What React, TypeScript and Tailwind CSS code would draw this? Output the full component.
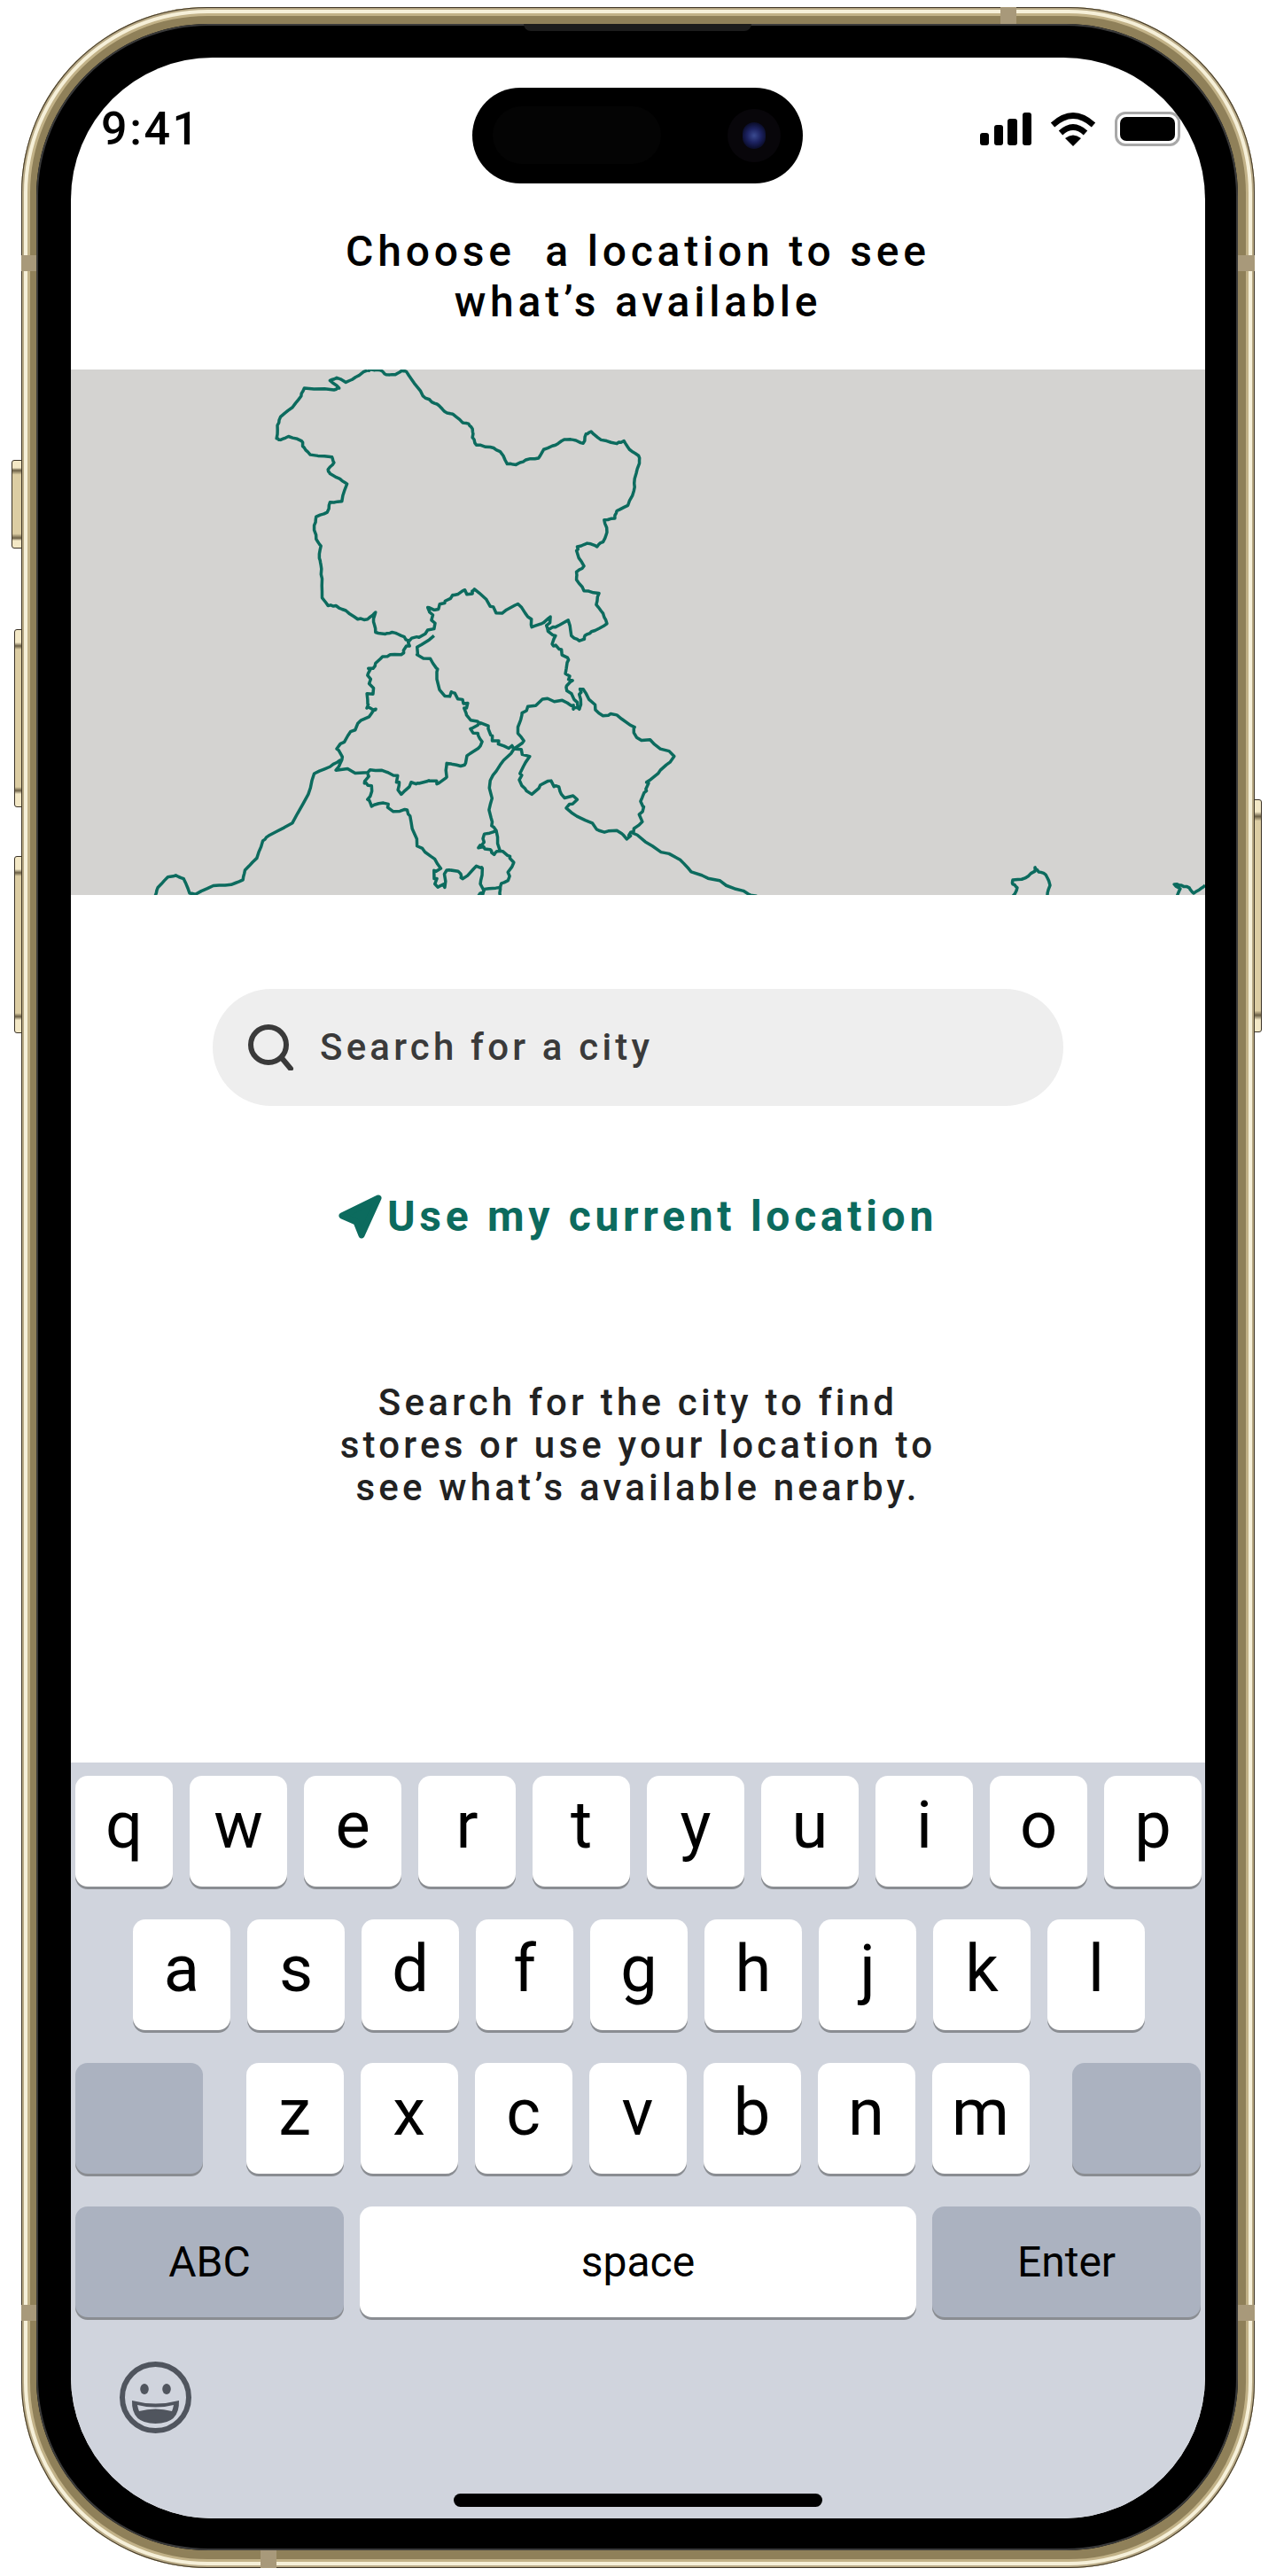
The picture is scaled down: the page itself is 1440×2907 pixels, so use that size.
import React from "react";

const roboto = "font-['Roboto',sans-serif]";

type Pt = number[];
function rough(flat: Pt, amp: number, seed: number) {
  let s = seed;
  const rnd = () => {
    s = (s * 9301 + 49297) % 233280;
    return s / 233280 - 0.5;
  };
  let d = "";
  for (let i = 0; i < flat.length; i += 2) {
    const x = flat[i];
    const y = flat[i + 1];
    d += (i === 0 ? "M" : "L") + x + " " + y + " ";
    if (i + 3 < flat.length && amp > 0) {
      const nx = flat[i + 2];
      const ny = flat[i + 3];
      d += "L" + ((x * 2 + nx) / 3 + rnd() * amp).toFixed(1) + " " + ((y * 2 + ny) / 3 + rnd() * amp).toFixed(1) + " ";
      d += "L" + ((x + nx * 2) / 3 + rnd() * amp).toFixed(1) + " " + ((y + ny * 2) / 3 + rnd() * amp).toFixed(1) + " ";
    }
  }
  return d;
}

const smooth: [Pt, number][] = [
  [[750,20,760,18,782,20,797,33,820,33,838,20,848,24,868,58,890,95,912,112,930,122,945,140,965,147,990,172,1005,175,1015,190,1015,215,1025,237,1060,243,1085,256,1103,292,1125,294,1150,280,1182,275,1195,250,1225,237,1247,221,1270,222,1295,232,1302,205,1315,198,1340,222,1380,233,1398,225,1412,250,1435,268,1437,290,1425,335,1423,370,1408,412,1380,428,1375,450,1348,454,1355,490,1345,518,1330,532,1305,522,1280,532,1280,550,1297,588,1278,605,1278,628,1297,660,1335,667,1328,700,1345,725,1355,755,1325,775,1303,787,1298,800,1285,805,1265,790,1257,745,1225,765,1205,770], 4],
  [[855,805,835,790,812,780,795,785,770,780,765,750,770,722,750,742,725,742,695,717,670,703,650,703,635,680,635,625,632,585,628,565,632,530,620,510,615,470,620,445,648,432,655,403,685,400,698,350,680,335,655,320,650,308,665,288,660,272,605,265,590,245,583,225,550,212,530,222,520,218,522,180,530,155,560,128,582,95,590,72,665,77,678,72,655,50,672,42,695,55,720,40,750,20], 4],
  [[682,1150,655,1170,615,1190,600,1250,560,1333,500,1370,485,1385,470,1435,440,1470,435,1498,405,1512,360,1515,315,1540,300,1537,285,1495,265,1485,245,1490,220,1520,213,1545], 2],
];
const jagged: [Pt, number][] = [
  [[1205,770,1212,735,1195,752,1165,765,1155,735,1130,698,1090,725,1060,705,1020,655,1015,668,990,660,965,672,945,695,920,715,902,708,915,730,918,770,880,795,855,805], 12],
  [[918,790,880,820,875,845,915,870,925,895,945,965,965,955,990,975,1000,1000,1000,1020,1035,1045,1055,1060,1065,1095,1095,1110,1120,1118], 14],
  [[1205,770,1225,790,1220,820,1240,830,1258,860,1250,900,1268,920,1252,940,1272,975,1285,1003,1270,1003,1255,985,1205,972,1155,995,1140,1020,1130,1055,1145,1095,1120,1118], 12],
  [[855,805,848,820,835,845,800,850,770,870,752,885,750,905,765,942,750,975,748,1000,770,1005,760,1015,725,1045,700,1080,672,1118,685,1150,670,1180,750,1187,785,1180,815,1195,830,1215,835,1250,860,1215,880,1218,905,1210,925,1220,950,1200,950,1160,975,1165,995,1165,1005,1135,1035,1110,1030,1080,1010,1060,1030,1045], 14],
  [[750,1190,742,1218,760,1225,750,1265,760,1285,790,1275,815,1300,850,1295,860,1330,875,1400,910,1430,935,1465,918,1480,920,1510,945,1520,950,1470,985,1480,990,1495,1025,1458,1040,1465,1035,1510,1040,1545], 12],
  [[1030,1545,1045,1525,1085,1520,1085,1545], 8],
  [[1120,1118,1085,1165,1060,1210,1060,1280,1065,1330,1075,1355,1045,1365,1040,1395,1030,1405,1060,1410,1070,1425,1085,1415,1075,1355], 10],
  [[1085,1415,1110,1430,1115,1460,1105,1500,1085,1520], 14],
  [[1120,1118,1160,1140,1135,1190,1140,1225,1165,1250,1205,1212,1225,1225,1240,1250,1280,1265,1252,1290,1300,1325,1335,1355,1380,1355,1405,1380,1415,1360,1435,1340,1445,1300,1440,1270,1455,1240,1455,1215,1490,1180,1525,1140,1475,1105,1430,1085,1425,1055,1380,1020,1345,1022,1325,990,1295,945,1285,960,1285,1003], 14],
  [[1415,1360,1470,1400,1540,1440,1568,1475,1640,1500,1700,1530,1734,1545], 12],
  [[2381,1545,2392,1521,2381,1511,2381,1498,2412,1493,2437,1473,2437,1462,2446,1475,2464,1483,2475,1514,2468,1545], 4],
  [[2796,1545,2804,1524,2789,1511,2807,1514,2827,1521,2838,1537,2852,1527,2867,1514], 3],
];

function MapLines() {
  const paths = [...smooth, ...jagged];
  return (
    <svg className="block w-full h-full" viewBox="0 18 2867 1524" preserveAspectRatio="none" fill="none">
      {paths.map(([pts, amp], i) => (
        <path
          key={i}
          d={rough(pts, amp, i * 37 + 11)}
          stroke="#0c6b5e"
          strokeWidth="3.5"
          strokeLinejoin="round"
          vectorEffect="non-scaling-stroke"
        />
      ))}
    </svg>
  );
}

function Key({ label, className = "" }: { label: string; className?: string }) {
  return (
    <div className={`w-[110px] h-[125px] shrink-0 rounded-[14px] bg-white shadow-[0_3px_0_#8a8d92] flex items-center justify-center pb-[13px] text-[74px] leading-none text-black ${roboto} ${className}`}>
      {label}
    </div>
  );
}

function Band({ className }: { className: string }) {
  return <div className={`absolute bg-[#a8997a] ${className}`} />;
}

export default function App() {
  return (
    <div className="relative w-[1440px] h-[2907px] bg-white overflow-hidden">
      {/* side buttons */}
      <div className="absolute left-[13px] top-[519px] w-[12px] h-[100px] rounded-l-[3px] border border-[#3a3226] bg-[linear-gradient(180deg,#f3e8c6_0%,#f3e8c6_8%,#6b5f45_11%,#dccda3_16%,#dccda3_84%,#6b5f45_89%,#f3e8c6_92%)]" />
      <div className="absolute left-[16px] top-[710px] w-[9px] h-[201px] rounded-l-[3px] border border-[#3a3226] bg-[linear-gradient(180deg,#f3e8c6_0%,#f3e8c6_7%,#6b5f45_9%,#dccda3_11%,#dccda3_89%,#6b5f45_91%,#f3e8c6_93%)]" />
      <div className="absolute left-[16px] top-[966px] w-[9px] h-[200px] rounded-l-[3px] border border-[#3a3226] bg-[linear-gradient(180deg,#f3e8c6_0%,#f3e8c6_7%,#6b5f45_9%,#dccda3_11%,#dccda3_89%,#6b5f45_91%,#f3e8c6_93%)]" />
      <div className="absolute left-[1415px] top-[902px] w-[9px] h-[263px] rounded-r-[3px] border border-[#3a3226] bg-[linear-gradient(180deg,#f3e8c6_0%,#f3e8c6_5%,#6b5f45_7%,#dccda3_9%,#dccda3_91%,#6b5f45_93%,#f3e8c6_95%)]" />

      {/* gold frame */}
      <div className="relative ml-[24px] mt-[8px] w-[1392px] h-[2890px] rounded-[210px] bg-[#8f8059] pt-[19px] pr-[19px] pb-[20px] pl-[17px] shadow-[inset_0_0_0_1px_#3f3626,inset_0_0_0_3px_#b8a985,inset_0_0_0_7px_#f6f0d9,inset_0_0_0_10px_#c2b288]">
        <Band className="left-0 top-[280px] w-[17px] h-[18px]" />
        <Band className="right-0 top-[280px] w-[19px] h-[18px]" />
        <Band className="left-0 top-[2593px] w-[17px] h-[18px]" />
        <Band className="right-0 top-[2593px] w-[19px] h-[18px]" />
        <Band className="left-[1105px] top-0 w-[18px] h-[19px]" />
        <Band className="left-[270px] bottom-0 w-[18px] h-[20px]" />

        {/* black bezel */}
        <div className="relative w-full h-full rounded-[194px] bg-black pt-[38px] pr-[37px] pb-[36px] pl-[39px] shadow-[inset_0_0_0_2px_#3a3a3a]">
          <div className="absolute left-[550px] top-0 w-[257px] h-[8px] rounded-b-[10px] bg-[#1c1c1c]" />

          {/* screen */}
          <div className={`relative w-[1280px] h-[2777px] rounded-[160px] bg-white overflow-hidden flex flex-col ${roboto}`}>
            {/* header */}
            <div className="h-[352px] flex flex-col shrink-0">
              <div className="flex items-center justify-between pl-[34px] pr-[28px] pt-[58px] h-[103px]">
                <span className="text-[52px] leading-[45px] font-medium tracking-[0.05em] text-black">9:41</span>
                <div className="flex items-center gap-[21px]">
                  <svg width="58" height="37" viewBox="0 0 58 37" fill="#000">
                    <rect x="0" y="23" width="10" height="14" rx="3" />
                    <rect x="16" y="14" width="10" height="23" rx="3" />
                    <rect x="31" y="7" width="11" height="30" rx="3" />
                    <rect x="48" y="0" width="10" height="37" rx="3" />
                  </svg>
                  <svg width="52" height="38" viewBox="0 0 52 38" fill="none">
                    <path d="M3 14 Q26 -7 49 14" stroke="#000" strokeWidth="6.5" />
                    <path d="M12 23 Q26 10 40 23" stroke="#000" strokeWidth="6.5" />
                    <path d="M26 38 L17 29 Q26 22 35 29 Z" fill="#000" />
                  </svg>
                  <div className="w-[74px] h-[39px] rounded-[12px] border-[3px] border-[#a8a8a8] p-[3px]">
                    <div className="w-full h-full rounded-[7px] bg-black" />
                  </div>
                </div>
              </div>
              <h1 className="mt-[87px] text-center text-[48px] leading-[57px] font-medium tracking-[0.1em] whitespace-pre text-black">
                {"Choose  a location to see\nwhat’s available"}
              </h1>
            </div>

            {/* map */}
            <div className="h-[593px] shrink-0 bg-[#d4d3d1]">
              <MapLines />
            </div>

            {/* body */}
            <div className="flex-1 flex flex-col items-center pt-[106px]">
              <div className="w-[960px] h-[132px] rounded-[66px] bg-[#eeeeee] flex items-center pl-[40px]">
                <svg width="52" height="52" viewBox="0 0 52 52" fill="none" stroke="#3a3a3a" strokeWidth="6" strokeLinecap="round">
                  <circle cx="23" cy="23" r="20" />
                  <path d="M38 38 L48 50" />
                </svg>
                <span className="ml-[29px] text-[42px] leading-none font-medium tracking-[0.1em] text-[#3a3a3a]">Search for a city</span>
              </div>
              <div className="mt-[97px] ml-[-1px] flex items-center gap-[6px]">
                <svg width="50" height="50" viewBox="0 0 50 50" fill="#0c6b5e" stroke="#0c6b5e" strokeWidth="7" strokeLinejoin="round">
                  <path d="M46 4 L5 24 L21 31 L27 46 Z" />
                </svg>
                <span className="text-[48px] leading-[56px] font-bold tracking-[0.098em] text-[#0c6b5e]">Use my current location</span>
              </div>
              <p className="mt-[158px] text-center text-[42px] leading-[48px] font-medium tracking-[0.1em] whitespace-pre text-[#222222]">
                {"Search for the city to find\nstores or use your location to\nsee what’s available nearby."}
              </p>
            </div>

            {/* keyboard */}
            <div className="h-[853px] shrink-0 bg-[#d0d4dd] flex flex-col gap-[37px] pt-[15px] px-[5px]">
              <div className="flex gap-[19px]">
                {"qwertyuiop".split("").map((k) => <Key key={k} label={k} />)}
              </div>
              <div className="flex gap-[19px] pl-[65px]">
                {"asdfghjkl".split("").map((k) => <Key key={k} label={k} />)}
              </div>
              <div className="flex justify-between">
                <div className="w-[144px] h-[125px] rounded-[14px] bg-[#abb2c0] shadow-[0_3px_0_#8a8d92]" />
                <div className="flex gap-[19px]">
                  {"zxcvbnm".split("").map((k) => <Key key={k} label={k} />)}
                </div>
                <div className="w-[145px] h-[125px] rounded-[14px] bg-[#abb2c0] shadow-[0_3px_0_#8a8d92]" />
              </div>
              <div className="flex gap-[18px] text-[48px] leading-none text-black">
                <div className="w-[303px] h-[125px] rounded-[14px] bg-[#abb2c0] shadow-[0_3px_0_#8a8d92] flex items-center justify-center">ABC</div>
                <div className="w-[628px] h-[125px] rounded-[14px] bg-white shadow-[0_3px_0_#8a8d92] flex items-center justify-center">space</div>
                <div className="w-[303px] h-[125px] rounded-[14px] bg-[#abb2c0] shadow-[0_3px_0_#8a8d92] flex items-center justify-center">Enter</div>
              </div>
              <div className="pl-[50px] mt-[13px]">
                <svg width="81" height="81" viewBox="0 0 81 81" fill="#50555e">
                  <circle cx="40.5" cy="40.5" r="37.5" fill="none" stroke="#50555e" strokeWidth="6" />
                  <ellipse cx="28" cy="31" rx="4.8" ry="6" />
                  <ellipse cx="53" cy="31" rx="4.8" ry="6" />
                  <path fillRule="evenodd" d="M14 44 Q40.5 51 67 44 Q68 70 40.5 70 Q13 70 14 44 Z M20 49 Q21 54 22 56 Q40.5 51 59 56 Q60 54 61 49 Q40.5 54 20 49 Z" />
                </svg>
              </div>
            </div>

            {/* home indicator */}
            <div className="absolute left-[432px] top-[2749px] w-[416px] h-[15px] rounded-full bg-black" />
          </div>

          {/* dynamic island */}
          <div className="absolute left-[492px] top-[72px] w-[373px] h-[108px] rounded-[54px] bg-black">
            <div className="absolute left-[23px] top-[21px] w-[190px] h-[65px] rounded-[33px] bg-[#040404]" />
            <div className="absolute left-[288px] top-[24px] w-[60px] h-[60px] rounded-full bg-[#08060a] flex items-center justify-center">
              <div className="w-[26px] h-[30px] rounded-full bg-[radial-gradient(circle_at_50%_50%,#3a4a90_0%,#1c2260_40%,#0c0f30_70%,#08060a_100%)]" />
            </div>
          </div>
        </div>
      </div>
    </div>
  );
}
